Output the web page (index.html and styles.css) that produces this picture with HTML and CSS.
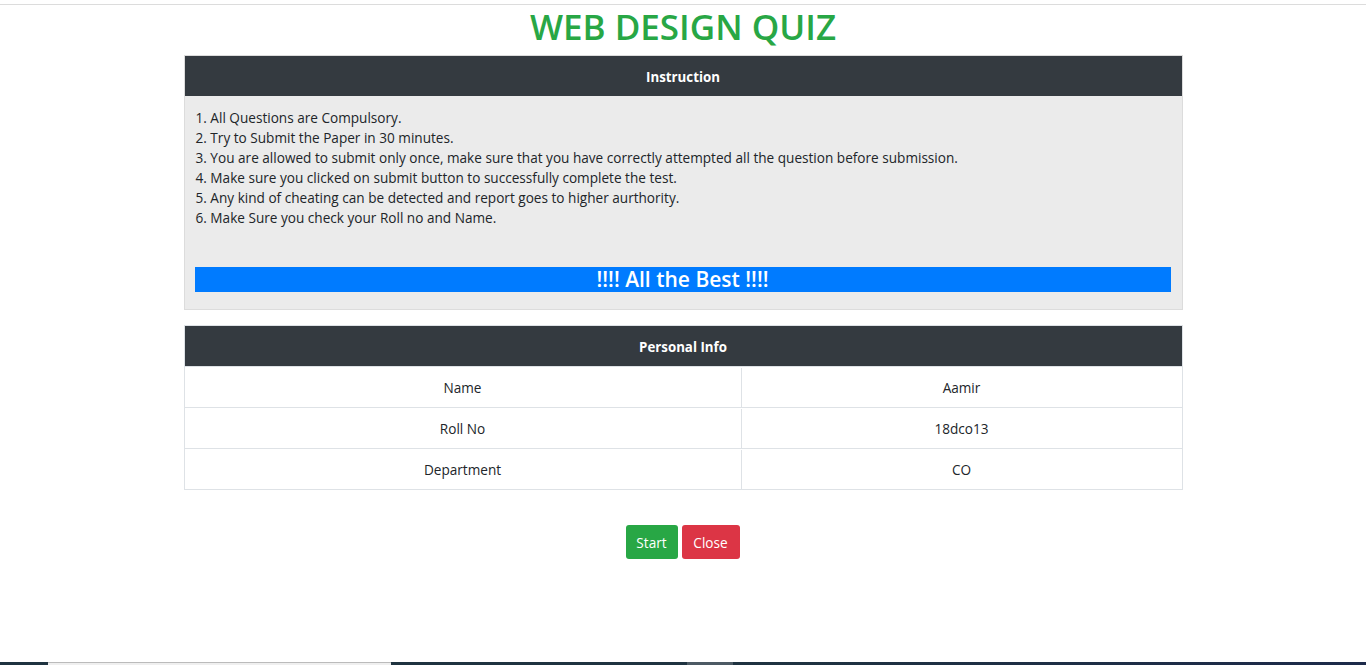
FILE: index.html
```html
<!DOCTYPE html>
<html lang="en">
<head>
<meta charset="utf-8">
<title>Web Design Quiz</title>
<link rel="stylesheet" href="styles.css">
</head>
<body>
<div class="page">
  <div class="topline"></div>
  <h1 class="title">WEB DESIGN QUIZ</h1>
  <main class="wrap">
    <section class="card">
      <div class="card-head">Instruction</div>
      <div class="card-body">
        <p class="line">1. All Questions are Compulsory.</p>
        <p class="line">2. Try to Submit the Paper in 30 minutes.</p>
        <p class="line">3. You are allowed to submit only once, make sure that you have correctly attempted all the question before submission.</p>
        <p class="line">4. Make sure you clicked on submit button to successfully complete the test.</p>
        <p class="line">5. Any kind of cheating can be detected and report goes to higher aurthority.</p>
        <p class="line">6. Make Sure you check your Roll no and Name.</p>
        <div class="best">!!!! All the Best !!!!</div>
      </div>
    </section>
    <section class="card info">
      <div class="card-head">Personal Info</div>
      <div class="row"><div class="cell left">Name</div><div class="cell right">Aamir</div></div>
      <div class="row"><div class="cell left">Roll No</div><div class="cell right">18dco13</div></div>
      <div class="row"><div class="cell left">Department</div><div class="cell right">CO</div></div>
    </section>
    <div class="actions">
      <button class="btn start">Start</button>
      <button class="btn close">Close</button>
    </div>
  </main>
  <div class="taskbar">
    <span class="tb-a"></span><span class="tb-b"></span><span class="tb-c"></span><span class="tb-d"></span><span class="tb-e"></span>
  </div>
</div>
</body>
</html>
```
FILE: styles.css
```css
* { box-sizing: border-box; }
html, body { margin: 0; padding: 0; }
body {
  font-family: "Open Sans", "Noto Sans", "Liberation Sans", sans-serif;
  color: #212529;
  background: #fff;
  font-size: 13.6px;
}
.page {
  height: 665px;
  display: flex;
  flex-direction: column;
  overflow: hidden;
}
.topline {
  margin-top: 4px;
  border-top: 1px solid #dcdcdc;
}
.title {
  margin: 0;
  text-align: center;
  color: #28a745;
  font-size: 35px;
  line-height: 44px;
  font-weight: 600;
  letter-spacing: 0;
  height: 50px;
}
.wrap {
  width: 999px;
  margin: 0 auto;
  display: flex;
  flex-direction: column;
}
.card {
  border: 1px solid #dcdcdc;
  background: #ebebeb;
}
.card-head {
  background: #343a40;
  color: #fff;
  font-weight: 700;
  font-size: 13.3px;
  height: 40px;
  padding-top: 2px;
  display: flex;
  align-items: center;
  justify-content: center;
}
.card-body {
  padding: 12px 10px 17px 10px;
}
.line {
  margin: 0;
  line-height: 20px;
  padding-left: 1px;
}
.best {
  margin-top: 39px;
  background: #007bff;
  color: #fff;
  text-align: center;
  font-weight: 600;
  font-size: 21px;
  height: 25px;
  line-height: 25px;
  margin-right: 1px;
}
.info {
  margin-top: 15px;
  background: #fff;
  border-color: #dee2e6;
}
.row {
  display: flex;
  height: 41px;
  border-top: 1px solid #dee2e6;
  padding-top: 1px;
}
.cell {
  display: flex;
  align-items: center;
  justify-content: center;
}
.left { width: 557px; border-right: 1px solid #dee2e6; }
.right { flex: 1; }
.actions {
  display: flex;
  justify-content: center;
  gap: 4px;
  margin-top: 35px;
  padding-right: 1px;
}
.btn {
  font-family: inherit;
  font-size: 13.6px;
  color: #fff;
  border: 0;
  border-radius: 3px;
  height: 34px;
  padding: 0 8px;
}
.start { background: #28a745; width: 52px; }
.close { background: #dc3545; width: 58px; }
.taskbar {
  margin-top: auto;
  height: 3px;
  display: flex;
  background: #1f3340;
}
.tb-a { width: 48px; }
.tb-b { width: 343px; background: #efefef; border-top: 1px solid #bbb; }
.tb-c { width: 296px; }
.tb-d { width: 46px; background: #4d5a64; }
.tb-e { flex: 1; background: linear-gradient(90deg, #1f3340, #1d2a4a); }
```
